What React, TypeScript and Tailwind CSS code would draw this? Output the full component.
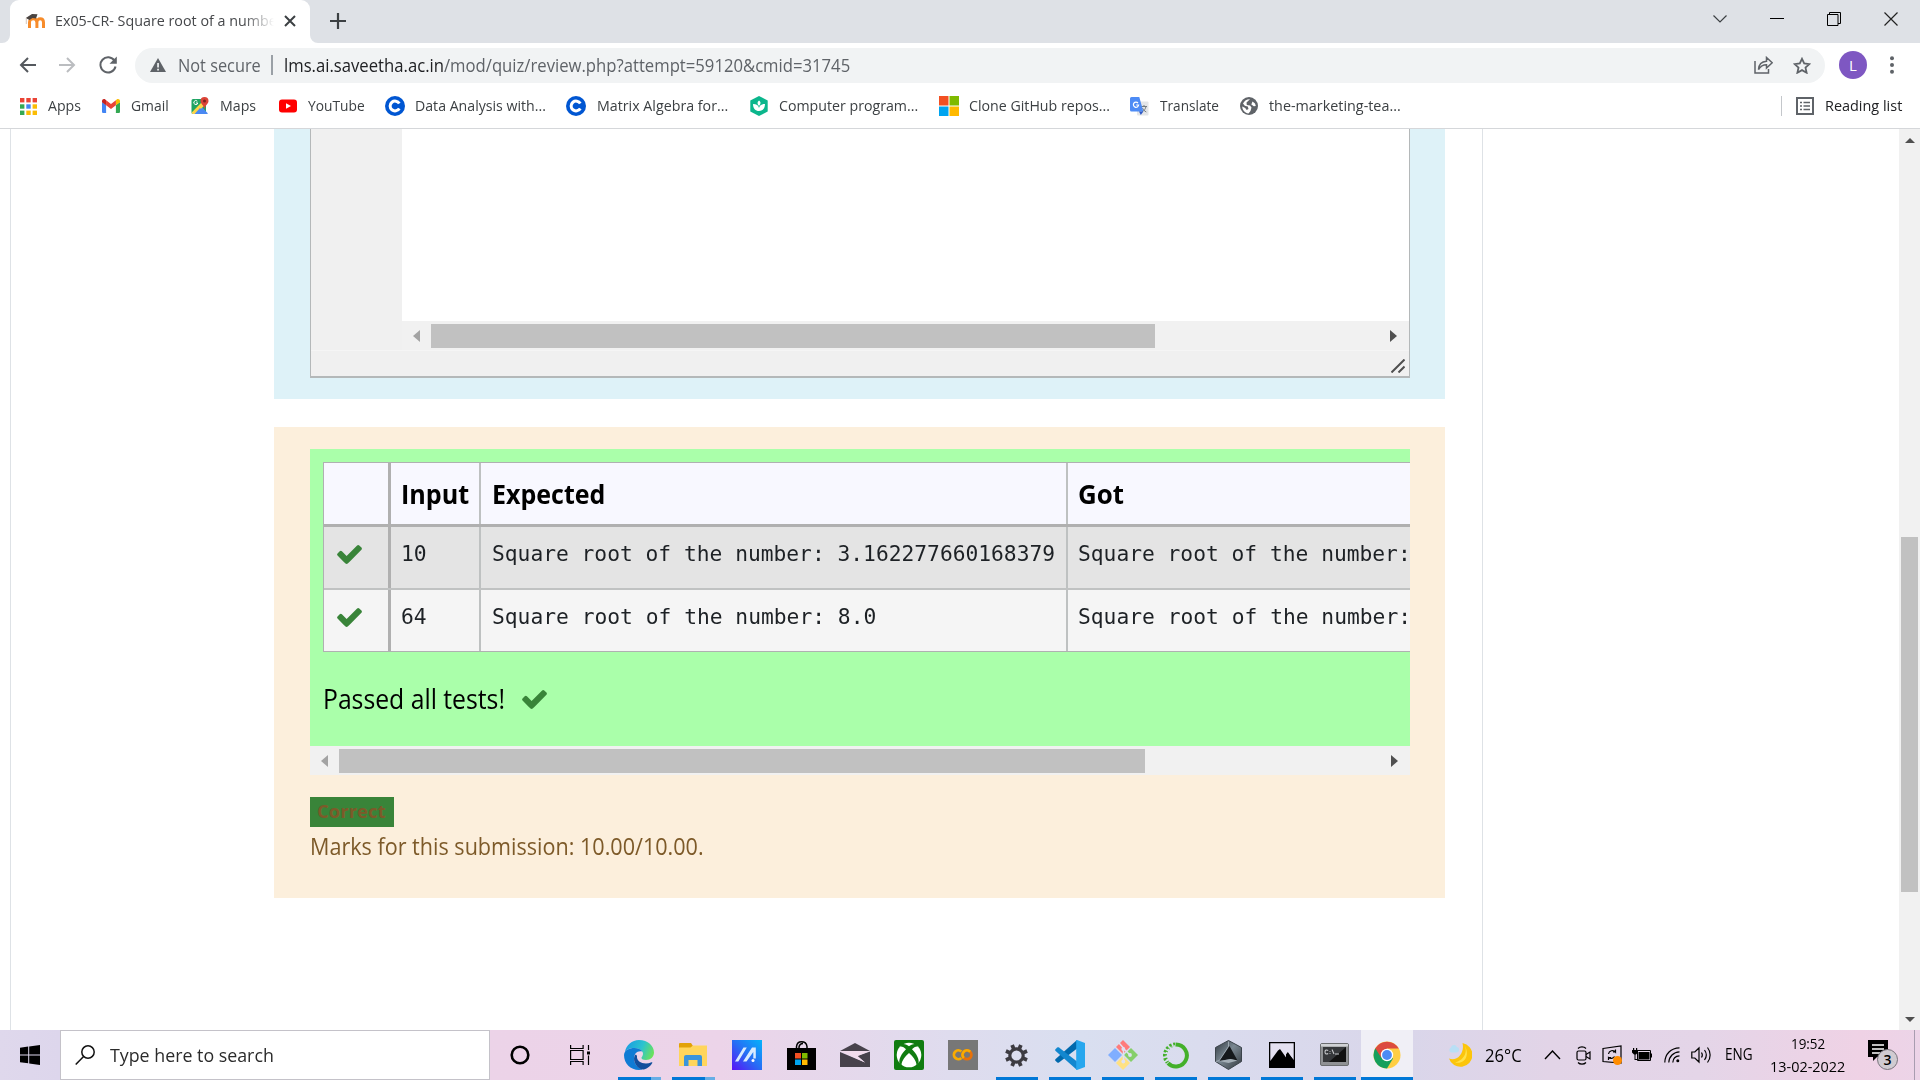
import { useLayoutEffect, useRef, useState, type ReactNode } from "react";

/** Single line of text condensed or widened to fill the width set by its class. */
function Fit({ className = "", children }: { className?: string; children: ReactNode }) {
  const outer = useRef<HTMLSpanElement>(null);
  const inner = useRef<HTMLSpanElement>(null);
  const [scale, setScale] = useState(1);
  useLayoutEffect(() => {
    if (outer.current && inner.current) {
      setScale(outer.current.clientWidth / inner.current.offsetWidth);
    }
  }, []);
  return (
    <span ref={outer} className={`block shrink-0 text-left ${className}`}>
      <span
        ref={inner}
        className="inline-block origin-left whitespace-nowrap"
        style={{ transform: `scaleX(${scale})` }}
      >
        {children}
      </span>
    </span>
  );
}

function Check({ className = "" }: { className?: string }) {
  return (
    <svg viewBox="121 334 1550 1188" className={`h-[19px] w-[25px] shrink-0 fill-[#398439] ${className}`}>
      <path d="M1671 566q0 40-28 68l-724 724-136 136q-28 28-68 28t-68-28l-136-136-362-362q-28-28-28-68t28-68l136-136q28-28 68-28t68 28l294 295 656-657q28-28 68-28t68 28l136 136q28 28 28 68z" />
    </svg>
  );
}

/* ---------- browser chrome ---------- */

function MoodleIcon() {
  return (
    <svg viewBox="0 0 20 16" className="h-4 w-5 shrink-0">
      <path d="M4.5 15V9.5c0-2.600 1.500-3.700 3.700-3.700s3.700 1.100 3.700 3.700V15M11.900 9.500c0-2.600 1.400-3.700 3.300-3.700s3.300 1.100 3.300 3.700V15" fill="none" stroke="#f78c2b" strokeWidth="3" />
      <path d="M.8 5 7 1l5.500.2-1.500 4.300-3.500-.5-3 2z" fill="#4a4441" />
      <path d="M1.300 5v6" stroke="#c9b8a8" strokeWidth=".8" />
    </svg>
  );
}

function TabStrip() {
  return (
    <div className="flex h-[43px] bg-[#dee1e6] pl-[2px]">
      <svg viewBox="0 0 8 8" className="h-2 w-2 self-end fill-white">
        <path d="M8 0v8H0a8 8 0 0 0 8-8z" />
      </svg>
      <div className="flex h-full w-[300px] items-center rounded-t-[9px] bg-white pb-[2px] pl-[15px]">
        <MoodleIcon />
        <div className="ml-[10px] w-[219px] overflow-hidden [mask-image:linear-gradient(to_right,black_86%,transparent)]">
          <Fit className="w-[228px] text-[15px] text-[#45474a]">Ex05-CR- Square root of a number</Fit>
        </div>
        <svg viewBox="0 0 12 12" className="ml-[10px] h-3 w-3 stroke-[#3c4043] stroke-2">
          <path d="M1 1l10 10M11 1 1 11" />
        </svg>
      </div>
      <svg viewBox="0 0 8 8" className="h-2 w-2 self-end fill-white">
        <path d="M0 0v8h8a8 8 0 0 1-8-8z" />
      </svg>
      <svg viewBox="0 0 16 16" className="mt-[13px] ml-[12px] h-4 w-4 stroke-[#3c4043] stroke-[2.200]">
        <path d="M8 0v16M0 8h16" />
      </svg>
      <div className="mt-[11px] ml-auto mr-[22px] flex h-[15px] items-center gap-[43px] text-black">
        <svg viewBox="0 0 14 8" className="h-2 w-[14px] fill-none stroke-[#3c4043] stroke-[1.200]">
          <path d="M.5.5 7 7 13.500.5" />
        </svg>
        <svg viewBox="0 0 14 2" className="h-[2px] w-[14px]">
          <path d="M0 .5h14" stroke="#000" />
        </svg>
        <svg viewBox="0 0 14 14" className="h-[14px] w-[14px] fill-none stroke-black">
          <path d="M.5 2.500h10.500v11H.5zM2.500 2.500v-2h11v11h-2.500" />
        </svg>
        <svg viewBox="0 0 14 14" className="h-[14px] w-[14px] stroke-[#222] stroke-[1.200]">
          <path d="M.5.5l13 13M13.500.5l-13 13" />
        </svg>
      </div>
    </div>
  );
}

function AddressBar() {
  return (
    <div className="flex h-[44px] items-center bg-white pl-[19px] text-[17.500px] text-[#5f6368]">
      <svg viewBox="0 0 17 16" className="h-4 w-[17px] fill-none stroke-[#55595e] stroke-2">
        <path d="M17 8H2M9 1 2 8l7 7" />
      </svg>
      <svg viewBox="0 0 17 16" className="ml-[23px] h-4 w-[17px] fill-none stroke-[#bbbdc0] stroke-2">
        <path d="M0 8h15M8 1l7 7-7 7" />
      </svg>
      <svg viewBox="0 0 18 18" className="ml-[23px] h-[18px] w-[18px] fill-none stroke-[#5f6368] stroke-2">
        <path d="M15.500 4.800A7.600 7.600 0 1 0 16.500 10.500" />
        <path d="M17.800.5v7.300h-7.300z" fill="#5f6368" stroke="none" />
      </svg>
      <div className="ml-[18px] flex h-[35px] w-[1690px] items-center rounded-full bg-[#f1f3f4]">
        <svg viewBox="0 0 16 14" className="ml-[15px] h-[14px] w-4 fill-[#5f6368]">
          <path d="M8 0l8 14H0z" />
          <path d="M7.200 5h1.700v4.500H7.200zM7.200 10.700h1.700v1.700H7.200z" fill="#f1f3f4" />
        </svg>
        <Fit className="ml-3 w-[83px]">Not secure</Fit>
        <div className="ml-[10px] h-5 w-[2px] bg-[#9aa0a6]" />
        <Fit className="ml-[11px] w-[566px]">
          <span className="text-[#202124]">lms.ai.saveetha.ac.in</span>/mod/quiz/review.php?attempt=59120&amp;cmid=31745
        </Fit>
        <svg viewBox="0 0 19 18" className="ml-auto h-[18px] w-[19px] fill-none stroke-[#5f6368] stroke-[1.500]">
          <path d="M1 5v12h13.500v-4" />
          <path d="M4.500 13.500c.3-5 3-8 8-8.300V1.500l5.700 5.300-5.700 5.200V8.700c-3.500 0-6 1.500-8 4.800z" />
        </svg>
        <svg viewBox="0 0 18 17" className="mr-[14px] ml-[20px] h-[17px] w-[18px] fill-none stroke-[#5f6368] stroke-[1.800]">
          <path d="M9 1.800l2.200 4.700 5.200.6-3.900 3.500 1.100 5.100L9 13.100l-4.600 2.600 1.100-5.100L1.600 7.100l5.200-.6z" />
        </svg>
      </div>
      <div className="ml-[14px] flex h-7 w-7 items-center justify-center rounded-full bg-[#7e57c2] text-[15px] text-white">L</div>
      <svg viewBox="0 0 4 18" className="ml-[23px] h-[18px] w-1 fill-[#5f6368]">
        <circle cx="2" cy="2.200" r="2" />
        <circle cx="2" cy="9" r="2" />
        <circle cx="2" cy="15.800" r="2" />
      </svg>
    </div>
  );
}

const appDots = ["#ea4335", "#ea4335", "#ea4335", "#34a853", "#4285f4", "#fbbc04", "#34a853", "#fbbc04", "#fbbc04"];

const AppsIcon = (
  <svg viewBox="0 0 17 17" className="h-[17px] w-[17px]">
    {appDots.map((c, i) => (
      <rect key={i} x={(i % 3) * 6.300} y={Math.floor(i / 3) * 6.300} width="4.400" height="4.400" fill={c} />
    ))}
  </svg>
);

const GmailIcon = (
  <svg viewBox="0 0 18 14" className="h-[14px] w-[18px]">
    <path d="M0 3v9.700C0 13.400.6 14 1.300 14h2.800V6z" fill="#4285f4" />
    <path d="M18 3v9.700c0 .7-.6 1.300-1.300 1.300h-2.800V6z" fill="#34a853" />
    <path d="M13.900 1.300v5L18 3.200V2c0-1.800-2-2.500-3.300-1.500z" fill="#fbbc04" />
    <path d="M4.100 6.200v-5L9 5l4.900-3.800v5L9 10z" fill="#ea4335" />
    <path d="M0 2v1.200l4.100 3.100v-5L3.300.5C2-.5 0 .2 0 2z" fill="#c5221f" />
  </svg>
);

const MapsIcon = (
  <svg viewBox="0 0 18 18" className="h-[18px] w-[18px]">
    <path d="M2 2h13v15H2a1.500 1.500 0 0 1-1.500-1.500v-12A1.500 1.500 0 0 1 2 2z" fill="#1fa463" />
    <path d="M1 16.500 9 8l8 8.500-1 .5H2z" fill="#4a89f3" />
    <path d="M.7 15.500 11 5l3 3-9.500 9H1.500z" fill="#fdd545" />
    <path d="M3.500 17 9 11l5.500 6z" fill="#4a89f3" />
    <path d="M13.500 0a4 4 0 0 1 4 4c0 3-3.500 4-4 8.500C13 8 9.500 7 9.500 4a4 4 0 0 1 4-4z" fill="#db4437" />
    <circle cx="13.500" cy="4" r="1.500" fill="#7b231e" />
    <path d="M6.300 4.200A2 2 0 1 0 6.800 6H5" stroke="#fff" fill="none" />
  </svg>
);

const YouTubeIcon = (
  <svg viewBox="0 0 18 13" className="h-[14px] w-[18px]">
    <rect width="18" height="13" rx="3" fill="#f00" />
    <path d="M7 3.700v5.600l5-2.800z" fill="#fff" />
  </svg>
);

const CourseraIcon = (
  <svg viewBox="0 0 20 20" className="h-5 w-5">
    <circle cx="10" cy="10" r="10" fill="#0056d2" />
    <path d="M14.300 7.600a4.900 4.900 0 1 0 0 4.800" fill="none" stroke="#fff" strokeWidth="3" />
  </svg>
);

const SproutIcon = (
  <svg viewBox="0 0 20 20" className="h-5 w-5">
    <path d="M10 0l8.700 4.500v11L10 20l-8.700-4.500v-11z" fill="#0bb68c" />
    <path d="M10 4.500c2 1.500 2 3.500 0 5.500-2-2-2-4 0-5.500zM4 8c3.500 0 5.500 1.500 6 4 .5-2.500 2.500-4 6-4 0 4.500-2.500 7-6 7s-6-2.500-6-7z" fill="#fff" />
  </svg>
);

const MicrosoftIcon = (
  <svg viewBox="0 0 20 20" className="h-5 w-5">
    <path d="M0 0h9.500v9.500H0z" fill="#f25022" />
    <path d="M10.500 0H20v9.500h-9.500z" fill="#7fba00" />
    <path d="M0 10.500h9.500V20H0z" fill="#00a4ef" />
    <path d="M10.500 10.500H20V20h-9.500z" fill="#ffb900" />
  </svg>
);

const TranslateIcon = (
  <svg viewBox="0 0 19 19" className="h-[19px] w-[19px]">
    <rect x="7" y="4.500" width="11.500" height="14" rx="1" fill="#e3e5e8" />
    <path d="M11 9.500h6M14 8v1.500M16 9.500c-.5 2.500-2 4.300-4 5.500M12.500 11c.7 1.700 2 3 3.800 4" stroke="#737b80" fill="none" />
    <path d="M1.500 0h7.800l4 14.500H1.500A1.500 1.500 0 0 1 0 13V1.500A1.500 1.500 0 0 1 1.500 0z" fill="#4d8bf5" />
    <path d="M9 14.500h4.300L10.800 18z" fill="#2a56c6" />
    <path d="M8 6A2.600 2.600 0 1 0 8.600 8H6.200" stroke="#fff" strokeWidth="1.200" fill="none" />
  </svg>
);

const GlobeIcon = (
  <svg viewBox="0 0 18 18" className="h-[18px] w-[18px]">
    <circle cx="9" cy="9" r="9" fill="#5f6368" />
    <path d="M10 2.200 6.500 5.500 6.800 8l3.200.5 1.500 2-1 3.500-2 2.500C5 16 2.500 13.500 2.200 9.500l3 1.500 1.500 2 1.800-1-.7-2.500-3-.8L3 6.500C4.500 3.500 7 2 10 2.200zM12.500 4.500l2.500 2 .8 2.500-2 .3-2.500-1.800z" fill="#fff" />
  </svg>
);

const bookmarks = [
  { icon: AppsIcon, label: "Apps", gap: "ml-[20px]", icw: "w-[17px]", w: "w-[33px]", tg: "ml-[11px]" },
  { icon: GmailIcon, label: "Gmail", gap: "ml-[21px]", icw: "w-[18px]", w: "w-[38px]", tg: "ml-[11px]" },
  { icon: MapsIcon, label: "Maps", gap: "ml-[22px]", icw: "w-[18px]", w: "w-[36px]", tg: "ml-[11px]" },
  { icon: YouTubeIcon, label: "YouTube", gap: "ml-[23px]", icw: "w-[18px]", w: "w-[57px]", tg: "ml-[11px]" },
  { icon: CourseraIcon, label: "Data Analysis with...", gap: "ml-[20px]", icw: "w-[20px]", w: "w-[131px]", tg: "ml-[10px]" },
  { icon: CourseraIcon, label: "Matrix Algebra for...", gap: "ml-[20px]", icw: "w-[20px]", w: "w-[131px]", tg: "ml-[11px]" },
  { icon: SproutIcon, label: "Computer program...", gap: "ml-[21px]", icw: "w-[20px]", w: "w-[139px]", tg: "ml-[10px]" },
  { icon: MicrosoftIcon, label: "Clone GitHub repos...", gap: "ml-[21px]", icw: "w-[20px]", w: "w-[141px]", tg: "ml-[10px]" },
  { icon: TranslateIcon, label: "Translate", gap: "ml-[20px]", icw: "w-[19px]", w: "w-[59px]", tg: "ml-[11px]" },
  { icon: GlobeIcon, label: "the-marketing-tea...", gap: "ml-[21px]", icw: "w-[18px]", w: "w-[132px]", tg: "ml-[11px]" },
];

function BookmarksBar() {
  return (
    <div className="flex h-[42px] items-center border-b border-[#d5d7da] bg-white pb-[3px] text-[15px] text-[#3c4043]">
      {bookmarks.map((b) => (
        <div key={b.label} className={`flex items-center ${b.gap}`}>
          <div className={`shrink-0 ${b.icw}`}>{b.icon}</div>
          <Fit className={`pb-[2px] ${b.tg} ${b.w}`}>{b.label}</Fit>
        </div>
      ))}
      <div className="mr-[18px] ml-auto flex items-center">
        <div className="h-5 w-px bg-[#c4c7cb]" />
        <svg viewBox="0 0 18 18" className="ml-[14px] h-[18px] w-[18px] fill-none stroke-[#5f6368] stroke-2">
          <path d="M1 1h16v16H1z" />
          <path d="M4 5.500h2M4 9h2M4 12.500h2M7.500 5.500H14M7.500 9H14M7.500 12.500H14" strokeWidth="1.500" />
        </svg>
        <Fit className="ml-[11px] w-[77px] pb-[2px] text-[#202124]">Reading list</Fit>
      </div>
    </div>
  );
}

/* ---------- page ---------- */

function HorizontalScrollbar({ thumb, right }: { thumb: string; right: string }) {
  return (
    <div className="flex h-[29px] items-center bg-[#f1f1f1]">
      <svg viewBox="0 0 7 12" className="ml-[11px] h-3 w-[7px] fill-[#a3a3a3]">
        <path d="M7 0v12L0 6z" />
      </svg>
      <div className={`ml-[11px] h-6 bg-[#c1c1c1] ${thumb}`} />
      <svg viewBox="0 0 7 12" className={`ml-auto h-3 w-[7px] fill-[#505050] ${right}`}>
        <path d="M0 0v12l7-6z" />
      </svg>
    </div>
  );
}

function AnswerEditor() {
  return (
    <div className="h-[270px] w-[1171px] bg-[#def2f8] pl-9">
      <div className="flex h-[249px] w-[1100px] flex-col border border-t-0 border-b-2 border-[#b4b8b9] bg-[#f0f0f0]">
        <div className="flex h-[221px]">
          <div className="w-[91px] shrink-0" />
          <div className="flex-1">
            <div className="h-[192px] bg-white" />
            <HorizontalScrollbar thumb="w-[724px]" right="mr-[12px]" />
          </div>
        </div>
        <div className="flex flex-1 items-end justify-end border-t border-[#f5f5f5] pr-1 pb-[3px]">
          <svg viewBox="0 0 14 14" className="h-[14px] w-[14px] stroke-[#4f4f4f] stroke-2">
            <path d="M.5 13.500l13-13M7.500 13.500l6-6" />
          </svg>
        </div>
      </div>
    </div>
  );
}

const tests = [
  { input: "10", expected: "Square root of the number: 3.162277660168379", width: "w-[563px]", row: "h-[63px] border-b-2 bg-[#e4e4e4]", check: "pt-[18px]" },
  { input: "64", expected: "Square root of the number: 8.0", width: "w-[384px]", row: "h-[61px] bg-[#f5f5f5]", check: "pt-[18px]" },
];

function ResultsTable() {
  return (
    <div className="mt-[13px] ml-[13px] w-[1400px] border border-[#afb1b1]">
      <div className="flex h-[64px] items-center border-b-[3px] border-[#b0b0b0] bg-[#f8f8ff] text-[27px] font-bold text-black">
        <div className="h-full w-[67px] border-r-[3px] border-[#b0b0b0]" />
        <div className="flex h-full w-[90px] items-center border-r-2 border-[#bec1c1] pt-[2px] pl-[10px]">
          <Fit className="w-[68px]">Input</Fit>
        </div>
        <div className="flex h-full w-[587px] items-center border-r-2 border-[#bec1c1] pt-[2px] pl-[11px]">
          <Fit className="w-[113px]">Expected</Fit>
        </div>
        <div className="flex h-full items-center pt-[2px] pl-[10px]">
          <Fit className="w-[46px]">Got</Fit>
        </div>
      </div>
      {tests.map((t) => (
        <div
          key={t.input}
          className={`flex border-[#c0c2c2] text-[20.500px] text-[#1d2125] [font-family:'DejaVu_Sans_Mono',monospace] ${t.row}`}
        >
          <div className={`h-full w-[67px] border-r-[3px] border-[#b0b0b0] pl-[13px] ${t.check}`}>
            <Check />
          </div>
          <div className="h-full w-[90px] border-r-2 border-[#bec1c1] pt-[12px] pl-[10px]">
            <Fit className="w-[26px]">{t.input}</Fit>
          </div>
          <div className="h-full w-[587px] border-r-2 border-[#bec1c1] pt-[12px] pl-[11px]">
            <Fit className={t.width}>{t.expected}</Fit>
          </div>
          <div className="pt-[12px] pl-[10px]">
            <Fit className={t.width}>{t.expected}</Fit>
          </div>
        </div>
      ))}
    </div>
  );
}

function Outcome() {
  return (
    <div className="mt-[28px] h-[471px] w-[1171px] bg-[#fcefdc] pt-[22px] pl-9 text-[#7d5a29]">
      <div className="w-[1100px]">
        <div className="h-[297px] overflow-hidden bg-[#aaffaa]">
          <ResultsTable />
          <div className="mt-[28px] ml-[13px] flex items-center text-[26.500px] text-black">
            <Fit className="w-[182px]">Passed all tests!</Fit>
            <Check className="ml-[17px]" />
          </div>
        </div>
        <HorizontalScrollbar thumb="w-[806px]" right="mr-[12px]" />
      </div>
      <div className="mt-[22px] flex h-[30px] w-[84px] items-center bg-[#398439] pb-[2px] pl-[7px] text-[18.500px] font-bold">
        <Fit className="w-[69px]">Correct</Fit>
      </div>
      <Fit className="mt-[2px] w-[394px] text-[23px]">Marks for this submission: 10.00/10.00.</Fit>
    </div>
  );
}

function PageView() {
  return (
    <div className="flex h-[901px] overflow-hidden bg-white">
      <div className="ml-[10px] w-[1473px] border-x border-[#dee2e6] pl-[263px]">
        <AnswerEditor />
        <Outcome />
      </div>
      <div className="ml-auto flex w-[21px] flex-col items-center bg-[#f1f1f1]">
        <svg viewBox="0 0 10 5" className="mt-[9px] h-[5px] w-[10px] fill-[#505050]">
          <path d="M0 5h10L5 0z" />
        </svg>
        <div className="mt-[394px] h-[355px] w-[17px] bg-[#c1c1c1]" />
        <svg viewBox="0 0 10 5" className="mt-auto mb-[8px] h-[5px] w-[10px] fill-[#505050]">
          <path d="M0 0h10L5 5z" />
        </svg>
      </div>
    </div>
  );
}

/* ---------- taskbar ---------- */

const EdgeIcon = (
  <svg viewBox="0 0 30 30" className="h-[30px] w-[30px]">
    <defs>
      <linearGradient id="edgeTop" x1="0" y1=".3" x2="1" y2=".6">
        <stop offset="0" stopColor="#1b9de2" />
        <stop offset=".55" stopColor="#2cc3cf" />
        <stop offset="1" stopColor="#6be25a" />
      </linearGradient>
    </defs>
    <path d="M1 12C2 5 8 0 15 0c9 0 15 6 15 12.500 0 4.500-3.500 7.500-8 7.500-3.500 0-5-1.500-4.500-2.500.8-1.200 1.500-2 1.500-4C19 10.500 15 8 10.500 8 6 8 2.500 9.500 1 12z" fill="url(#edgeTop)" />
    <path d="M0 15C.5 10 5 8 10.500 8c3.500 0 6.500 1.300 8 3.500-5-1.500-8.500 2-8.500 7 0 5.500 4 9.500 8.500 11-1 .3-2.300.5-3.500.5C6.500 30 0 23.500 0 15z" fill="#0f7bd4" />
    <path d="M10.500 16c-2 5 2.500 14 9.500 13.500 3.500-1 6.500-3.500 8.300-6.500.3-.7-.2-1-.8-.7-7 3.200-15.500-.3-14.500-6.300-.7-2-2-1.500-2.500 0z" fill="#124f9c" />
  </svg>
);

const FolderIcon = (
  <svg viewBox="0 0 28 24" className="h-6 w-7">
    <path d="M0 1a1 1 0 0 1 1-1h11l2 3-2 3H0z" fill="#e2a208" />
    <path d="M0 4.500h11.500L14 2.500h14V23H0z" fill="#ffd55c" />
    <path d="M5 23V14a2 2 0 0 1 2-2h14a2 2 0 0 1 2 2v9h-4.500v-6h-9v6z" fill="#3a94dc" />
  </svg>
);

const MyAsusIcon = (
  <svg viewBox="0 0 30 30" className="h-[30px] w-[30px]">
    <defs>
      <linearGradient id="asus" x1="0" y1="1" x2="1" y2="0">
        <stop offset="0" stopColor="#5a12f5" />
        <stop offset=".5" stopColor="#276df5" />
        <stop offset="1" stopColor="#04b4fb" />
      </linearGradient>
    </defs>
    <path d="M0 0h30v30H0z" fill="url(#asus)" />
    <path d="M3 21.500 11.500 7.500h3.300L6.300 21.500zM11 21.500 20 7.500h3.800v11h-2.500v-6.500l-6.800 9.500z" fill="#d8ebff" />
    <circle cx="21" cy="20.500" r="1.500" fill="#fff" />
  </svg>
);

const StoreIcon = (
  <svg viewBox="0 0 29 29" className="h-[29px] w-[29px]">
    <path d="M0 7h29v22H0z" />
    <path d="M9.500 8V5.500C10 2 12 .8 14.500.8s5 1.200 5.500 4.700V8M12 8V6c.5-2.500 2-3.500 4-3.500" fill="none" stroke="#000" strokeWidth="1.500" />
    <path d="M8 12h6v5.500H8z" fill="#f25022" />
    <path d="M15 12h5.500v5.500H15z" fill="#7fba00" />
    <path d="M8 18.500h6V24H8z" fill="#00a4ef" />
    <path d="M15 18.500h5.500V24H15z" fill="#ffb900" />
  </svg>
);

const MailIcon = (
  <svg viewBox="0 0 30 24" className="h-6 w-[30px] fill-[#47424b]">
    <path d="M15 0l15 8H0z" />
    <path d="M0 9l25 10.500L17.500 13 30 8.500V24H0z" />
    <path d="M0 8h30l-12.500 5L25 19.500z" fill="#f1dcec" />
  </svg>
);

const XboxIcon = (
  <svg viewBox="0 0 30 30" className="h-[30px] w-[30px]">
    <rect width="30" height="30" rx="2" fill="#107c10" />
    <circle cx="15" cy="15" r="12.300" fill="#fff" />
    <path d="M8 4c3-.5 5.500 1.200 7 2.200C16.500 5.200 19 3.500 22 4l2 2.500c-2-.5-4.500 1-6 2.800 4.500 4.500 7.500 10 6.500 14l-2 2c0-4.500-4-9.500-7.500-12.300C11.500 15.800 7.500 20.800 7.500 25.300l-2-2c-1-4 2-9.500 6.500-14C10.500 7.500 8 6 6 6.500z" fill="#107c10" />
  </svg>
);

const ColabIcon = (
  <svg viewBox="0 0 30 30" className="h-[30px] w-[30px]">
    <path d="M0 0h30v30H0z" fill="#777" />
    <path d="M13.300 11.500a4.400 4.400 0 1 0 0 6.500" fill="none" stroke="#f9ab00" strokeWidth="2.800" />
    <circle cx="19" cy="14.800" r="4.400" fill="none" stroke="#e8710a" strokeWidth="2.800" />
    <path d="M15.800 18a4.400 4.400 0 0 1 6.300-6.300" fill="none" stroke="#f9ab00" strokeWidth="2.800" />
  </svg>
);

const GearIcon = (
  <svg viewBox="0 0 22 22" className="h-[23px] w-[23px]">
    <circle cx="11" cy="11" r="6.400" fill="none" stroke="#3d3b41" strokeWidth="3" />
    <path d="M13.700 4.500 15.200.9M17.500 8.300 21.100 6.800M17.500 13.700l3.600 1.500M13.700 17.500l1.500 3.600M8.300 17.500l-1.500 3.600M4.500 13.700.9 15.200M4.500 8.300.9 6.800M8.300 4.500 6.800.9" stroke="#3d3b41" strokeWidth="3.600" />
  </svg>
);

const VsCodeIcon = (
  <svg viewBox="0 0 30 30" className="h-[30px] w-[30px]">
    <path d="M22 0v8.500L4 22.500c-.6.4-1.200.4-1.700 0L.6 21c-.6-.6-.6-1.300 0-1.900z" fill="#0069ad" />
    <path d="M22 30v-8.500L4 7.500c-.6-.4-1.200-.4-1.700 0L.6 9c-.6.6-.6 1.300 0 1.900z" fill="#1287cf" />
    <path d="M22 0l8 3v24l-8 3c-.5 0-.8-.3-.8-.8V1C21.200.4 21.500 0 22 0z" fill="#27a7ee" />
  </svg>
);

const GitIcon = (
  <svg viewBox="0 0 30 30" className="h-[30px] w-[30px]">
    <path d="M15 0l7 7-7 7-7-7z" fill="#ff7b7b" />
    <path d="M7 8l7 7-7 7-7-7z" fill="#80aeff" />
    <path d="M23 8l7 7-7 7-7-7z" fill="#86cf6b" />
    <path d="M15 16l7 7-7 7-7-7z" fill="#ffe182" />
    <path d="M11 3l4.500 5v14M16 9l6 6" stroke="#dfe2f2" strokeWidth="1.500" fill="none" />
    <circle cx="15.300" cy="9" r="1.900" fill="#dfe2f2" />
    <circle cx="15.300" cy="21.500" r="1.900" fill="#dfe2f2" />
    <circle cx="22" cy="15" r="1.900" fill="#dfe2f2" />
  </svg>
);

const AnacondaIcon = (
  <svg viewBox="0 0 27 27" className="h-[27px] w-[27px] fill-none stroke-[#43b02a]">
    <path d="M14 2.500a11 11 0 1 1-8 18.700" strokeWidth="4" />
    <path d="M13.500 2.500A11 11 0 0 0 5.500 20.500" strokeWidth="4" strokeDasharray="2.200 1.600" />
    <path d="M13 4A9.500 9.500 0 0 0 6 19" strokeWidth="1.500" stroke="#dfe2f2" strokeDasharray="1.500 2" />
  </svg>
);

const HexIcon = (
  <svg viewBox="0 0 27 30" className="h-[30px] w-[27px]">
    <defs>
      <linearGradient id="hex" x1="0" y1="0" x2="1" y2="1">
        <stop offset="0" stopColor="#2f373e" />
        <stop offset=".45" stopColor="#7b8892" />
        <stop offset="1" stopColor="#30363c" />
      </linearGradient>
    </defs>
    <path d="M13.500.5l13 7v14l-13 8-13-8v-14z" fill="url(#hex)" stroke="#3c444b" />
    <path d="M13.500 1.500v5L4.500 20.500l-3.500 1" stroke="#b7c2ca" fill="none" strokeWidth=".7" />
    <path d="M14.500 6l8 14.500-7-1.500-11 2z" fill="#15181b" />
    <path d="M4.500 21l11-2 7 1.500-9 2.500z" fill="#a5afb7" />
  </svg>
);

const PhotosIcon = (
  <svg viewBox="0 0 26 26" className="h-[26px] w-[26px]">
    <path d="M0 0h26v26H0z" />
    <path d="M1.300 1.300h23.400V18L19 11l-2 1.500 3 4-1.500 1L11 7l-2 1.500L1.300 19z" fill="#e4e1f0" />
    <path d="M17 12.500 18.800 10l5.900 8.500v6L17 17z" />
  </svg>
);

const TerminalIcon = (
  <svg viewBox="0 0 29 24" className="h-6 w-[29px]">
    <rect x=".5" y=".5" width="28" height="22" rx="1.500" fill="#8f9194" stroke="#6b6d70" />
    <path d="M1 1h27v2.500H1z" fill="#d0d2d5" />
    <path d="M3 4h23v15H3z" fill="#111" />
    <path d="M3 4h23L9 19H3z" fill="#36383b" />
    <path d="M8.200 7.500C6.500 6.500 5 7 5 9s1.500 2.500 3.200 1.500M10 8v.8M10 10.200v.8M12 6.500l2 4.500M15 11h4" stroke="#c6c8cb" strokeWidth="1.100" fill="none" />
  </svg>
);

const ChromeIcon = (
  <svg viewBox="0 0 28 28" className="h-7 w-7">
    <circle cx="14" cy="14" r="13.500" fill="#ffce43" />
    <path d="M14 14 2.300 7.300A13.500 13.500 0 0 0 14 27.500L20 17.500z" fill="#159f5c" />
    <path d="M14 14 2.300 7.300A13.500 13.500 0 0 1 25.700 7.500H14z" fill="#dc4b3e" />
    <path d="M2.300 7.300 8.400 17 9.500 9.500 14 7.500z" fill="#dc4b3e" />
    <circle cx="14" cy="14" r="6.200" fill="#fff" />
    <circle cx="14" cy="14" r="4.900" fill="#4c8bf5" />
  </svg>
);

const apps = [
  { name: "Edge", icon: EdgeIcon, state: "stacked" },
  { name: "Files", icon: FolderIcon, state: "stacked" },
  { name: "MyASUS", icon: MyAsusIcon, state: "idle" },
  { name: "Store", icon: StoreIcon, state: "idle" },
  { name: "Mail", icon: MailIcon, state: "idle" },
  { name: "Xbox", icon: XboxIcon, state: "idle" },
  { name: "Colab", icon: ColabIcon, state: "idle" },
  { name: "Settings", icon: GearIcon, state: "open" },
  { name: "VS Code", icon: VsCodeIcon, state: "open" },
  { name: "Git", icon: GitIcon, state: "open" },
  { name: "Anaconda", icon: AnacondaIcon, state: "open" },
  { name: "Armoury", icon: HexIcon, state: "open" },
  { name: "Photos", icon: PhotosIcon, state: "open" },
  { name: "Terminal", icon: TerminalIcon, state: "open" },
  { name: "Chrome", icon: ChromeIcon, state: "active" },
];

const cellStyles: Record<string, string> = {
  stacked: "w-[54px]",
  idle: "w-[54px]",
  open: "w-[53px]",
  active: "w-[52px] bg-[#f0eff6]",
};

function TaskbarApp({ icon, state }: { icon: ReactNode; state: string }) {
  return (
    <div className={`flex h-full flex-col items-center ${cellStyles[state]}`}>
      <div className="flex h-[47px] items-center pt-[3px]">{icon}</div>
      {state === "stacked" && (
        <div className="flex h-[3px] w-[43px]">
          <div className="w-[33px] bg-[#0078d7]" />
          <div className="flex-1 bg-[#66aee6]" />
        </div>
      )}
      {state === "open" && <div className="h-[3px] w-[42px] bg-[#0078d7]" />}
      {state === "active" && <div className="h-[3px] w-full bg-[#0078d7]" />}
    </div>
  );
}

function Tray() {
  return (
    <div className="ml-[35px] flex h-full flex-1 items-center text-black">
      <svg viewBox="0 0 24 24" className="h-6 w-6">
        <path d="M14.500 0A12 12 0 1 1 1 15.500C9 19 17 10 14.500 0z" fill="#fcc50b" />
        <path d="M15 0c6 7 2 17-8 19.500C18 22 23 10 15 0z" fill="#ffe24a" />
        <path d="M3 9.500a2.700 2.700 0 0 1 0-5c.5-3 5-3.300 5.700-.5 3 0 3.300 5 .3 5.500z" fill="#b9dff5" />
      </svg>
      <Fit className="ml-[13px] w-[37px] text-[18px]">26°C</Fit>
      <svg viewBox="0 0 17 10" className="ml-[22px] h-[10px] w-[17px] fill-none stroke-black stroke-[1.400]">
        <path d="M1 9l7.500-8L16 9" />
      </svg>
      <svg viewBox="0 0 15 19" className="ml-[15px] h-[19px] w-[15px] fill-none stroke-black stroke-[1.200]">
        <rect x="1" y="5" width="9" height="9" rx="1.500" />
        <path d="M10 8.500 14 6v7l-4-2.500M2 2.500C4 .3 8 .3 10 2.500M2 16.500c2 2.200 6 2.200 8 0" />
      </svg>
      <svg viewBox="0 0 21 20" className="ml-[11px] h-5 w-[21px] fill-none stroke-black stroke-[1.200]">
        <path d="M1 3.500 19 1v17L1 16.500z" />
        <path d="M6.500 9a4 4 0 0 1 7-2V4.500M13.500 7H11M12.500 11.500a4 4 0 0 1-6 1V15M6.500 12.500H9" />
        <circle cx="15.500" cy="15.500" r="4.500" fill="#ff8c00" stroke="none" />
      </svg>
      <svg viewBox="0 0 20 14" className="ml-[9px] h-[14px] w-5">
        <path d="M5.500 2.500h13v10h-13z" fill="none" stroke="#000" />
        <path d="M6.500 4h11v7.500h-11zM18.500 5.500H20v4h-1.500zM0 2h6v2.500L4 6.500H2L0 4.500zM1 0h1.200v2H1zM4 0h1.200v2H4zM2.500 6h1v5h3v1h-4z" />
      </svg>
      <svg viewBox="0 0 16 16" className="ml-[12px] h-4 w-4 fill-none stroke-black stroke-[1.200]">
        <path d="M.8 15.500C1 7 7 1 15.500.8M4.800 15.500c.2-6 4.700-10.500 10.700-10.700M8.800 15.500c.2-4 2.700-6.500 6.700-6.700" />
        <circle cx="13.800" cy="13.800" r="1.500" fill="#000" stroke="none" />
      </svg>
      <svg viewBox="0 0 21 18" className="ml-[11px] h-[18px] w-[21px] fill-none stroke-black stroke-[1.200]">
        <path d="M.8 6h3L8 2v14l-4.200-4h-3zM10.500 6.500c1 1.500 1 3.500 0 5M13.500 4c2.200 3 2.200 7 0 10M16.500 1.500c3.500 4.500 3.500 10.500 0 15" />
      </svg>
      <Fit className="ml-[13px] w-[28px] text-[15.500px]">ENG</Fit>
      <div className="ml-[17px] flex h-full w-[75px] flex-col items-center pt-[2px] text-[15px] leading-[23px]">
        <Fit className="w-[34px]">19:52</Fit>
        <Fit className="w-[75px]">13-02-2022</Fit>
      </div>
      <svg viewBox="0 0 30 30" className="ml-[23px] h-[30px] w-[30px]">
        <path d="M0 0h20v17H9l-4 4v-4H0z" />
        <path d="M4 5h12M4 9h12M4 13h8" stroke="#fff" strokeWidth="1.500" />
        <circle cx="19.500" cy="19.500" r="10" fill="#d0cbd1" stroke="#77727a" />
        <text x="19.500" y="24.500" textAnchor="middle" className="fill-black text-[14px] font-semibold">3</text>
      </svg>
      <div className="mr-[5px] ml-auto h-full w-px bg-[#a89db0]" />
    </div>
  );
}

function Taskbar() {
  return (
    <div className="flex h-[50px] items-center bg-[linear-gradient(90deg,#dfd8ec_0px,#ddd6ec_60px,#ecd3e8_490px,#ecd4e9_720px,#dfdcee_950px,#d9dff0_1080px,#dadcee_1200px,#d9d6ea_1400px,#e2d4e7_1550px,#e4d5e8_1700px,#efd2e5_1860px,#ecd4e8_1920px)]">
      <svg viewBox="0 0 20 20" className="ml-5 h-5 w-5 shrink-0">
        <path d="M0 2.800 8.200 1.600v7.800H0zM9.200 1.500 20 0v9.400H9.200zM0 10.400h8.200v7.900L0 17.200zM9.200 10.400H20V20L9.200 18.500z" />
      </svg>
      <div className="ml-5 flex h-full w-[430px] shrink-0 items-center border border-[#c4c2c9] bg-white text-[19px] text-[#2b2b2b]">
        <svg viewBox="0 0 20 20" className="ml-[14px] h-5 w-5 fill-none stroke-[#111] stroke-[1.500]">
          <circle cx="13" cy="7" r="6.200" />
          <path d="M8.600 11.500.7 19.500" />
        </svg>
        <Fit className="ml-[15px] w-[164px]">Type here to search</Fit>
      </div>
      <svg viewBox="0 0 20 20" className="ml-[20px] h-5 w-5 shrink-0 fill-none stroke-black stroke-[2.600]">
        <circle cx="10" cy="10" r="8.300" />
      </svg>
      <svg viewBox="0 0 21 20" className="ml-[40px] h-5 w-[21px] shrink-0 fill-none stroke-black stroke-[1.200]">
        <path d="M.6 0v3.500h12.500V0M.6 5.500h12.500v9H.6zM.6 20v-3.500h12.500V20M18.500 0v5M18.500 10.500V20" />
        <path d="M17 6.500h3V9.500h-3z" fill="#000" stroke="none" />
      </svg>
      <div className="ml-[21px] flex h-full shrink-0">
        {apps.map((a) => (
          <TaskbarApp key={a.name} icon={a.icon} state={a.state} />
        ))}
      </div>
      <Tray />
    </div>
  );
}

export default function App() {
  return (
    <div className="flex h-[1080px] w-[1920px] flex-col overflow-hidden bg-white [font-family:'Open_Sans','Noto_Sans',sans-serif]">
      <TabStrip />
      <AddressBar />
      <BookmarksBar />
      <PageView />
      <Taskbar />
    </div>
  );
}
